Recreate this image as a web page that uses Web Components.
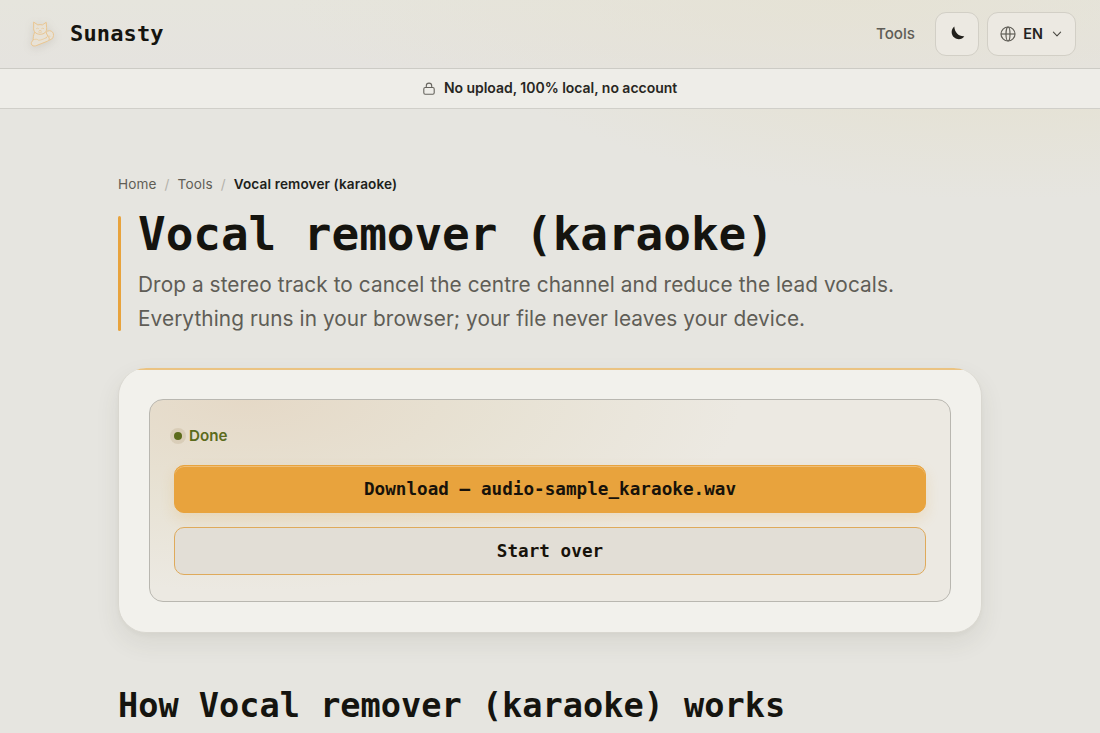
<!DOCTYPE html>
<html lang="en">
<head>
<meta charset="utf-8">
<title>Vocal remover (karaoke) - Sunasty</title>
<style>
  html, body {
    margin: 0;
    height: 100%;
    overflow: hidden;
  }

  body {
    --ink: #15140f;
    --muted: #5f5d56;
    --accent: #e8a33d;
    --line: #cccbc5;
    --mono: "DejaVu Sans Mono", "Liberation Mono", monospace;
    font-family: Inter, "Liberation Sans", sans-serif;
    color: var(--ink);
    background:
      radial-gradient(ellipse 560px 200px at 1000px 0, #e5e1d2 0%, #e5e2d5 50%, rgba(230, 229, 224, 0) 100%),
      #e6e5e0;
  }
</style>
</head>
<body>
<site-header></site-header>
<privacy-banner>No upload, 100% local, no account</privacy-banner>
<page-main>
  <bread-crumbs current="Vocal remover (karaoke)"></bread-crumbs>
  <tool-hero>
    <span slot="title">Vocal remover (karaoke)</span>
    Drop a stereo track to cancel the centre channel and reduce the lead vocals. Everything runs in your browser; your file never leaves your device.
  </tool-hero>
  <tool-card>
    <status-line>Done</status-line>
    <action-button variant="primary">Download — audio-sample_karaoke.wav</action-button>
    <action-button variant="secondary">Start over</action-button>
  </tool-card>
  <section-title>How Vocal remover (karaoke) works</section-title>
</page-main>

<script>
/** Small base: renders the template string of the subclass once */
class BaseElement extends HTMLElement {
  constructor() {
    super();
    this.attachShadow({ mode: "open" });
  }

  connectedCallback() {
    this.shadowRoot.innerHTML = this.template();
  }
}

class BrandMark extends BaseElement {
  template() {
    return `
      <style>
        :host {
          display: flex;
          align-items: center;
          gap: 12px;
        }

        svg {
          width: 34px;
          height: 34px;
          filter: drop-shadow(0 2px 4px rgba(90, 80, 60, 0.14));
        }

        .name {
          font: 700 22px/1 var(--mono);
          letter-spacing: 0.15px;
        }
      </style>
      <svg viewBox="0 0 34 34" fill="#e8e2d6" stroke="#e9c58f" stroke-width="1" stroke-linecap="round" stroke-linejoin="round">
        <path d="M21 18.500c0-3 2-4.800 4.400-4.800 2.700 0 4.400 2.200 4.100 4.800-.3 3-2.500 4.800-5.500 4.800z"/>
        <path d="M10.500 15.500c-1.200 3-1.400 5.500-1.300 7.600-1.800 1.300-2.500 3.300-1.300 4.900 1.100 1.400 3.200 1.200 5 .4l10.600-4.200c2.200-1 2.300-3.400.5-4.800l-2.200-4.400z"/>
        <path d="M10 5.300l3.800 2.600q2.200-.6 4.600 0l3.800-2.600.4 5.200c.6 4-2.200 6.800-6.400 6.800-4.300 0-7.200-2.800-6.600-6.800z"/>
        <path fill="none" stroke-width="0.7" d="M12.500 11.500q1-.8 2 0M17.700 11.500q1-.8 2 0M15.500 13.500h1.300M14.500 15q1.600.9 3.200 0M9.300 22.800c2.200-1 4-.8 5.400.5 2.800-.3 5.800-1.500 8-3M22 21.200c.7-2 2.200-2.600 4-2"/>
      </svg>
      <span class="name"><slot></slot></span>
    `;
  }
}

class HeaderButton extends BaseElement {
  template() {
    return `
      <style>
        :host {
          display: flex;
          align-items: center;
          justify-content: center;
          box-sizing: border-box;
          min-width: 44px;
          height: 44px;
          border: 1px solid #d2cfc6;
          border-radius: 11px;
          background: #ece9e2;
          color: #24231f;
          font-size: 14.4px;
          font-weight: 600;
        }
      </style>
      <slot></slot>
    `;
  }
}

class SiteHeader extends BaseElement {
  template() {
    return `
      <style>
        :host {
          display: flex;
          align-items: center;
          justify-content: space-between;
          box-sizing: border-box;
          height: 69px;
          padding: 0 24px;
          border-bottom: 1px solid var(--line);
          background:
            radial-gradient(ellipse 560px 130px at 850px 0, rgba(229, 225, 210, 0.7), rgba(230, 227, 220, 0)),
            linear-gradient(#e6e5dd, #e5e3df);
        }

        nav {
          display: flex;
          align-items: center;
          gap: 8px;
        }

        .link {
          margin: -2px 12px 0 0;
          color: var(--muted);
          font-size: 15.2px;
          font-weight: 550;
        }

        .lang {
          width: 89px;
        }

        .text {
          margin-top: -1px;
        }

        .globe {
          margin: 0 7px 0 -1px;
        }

        .chevron {
          margin-left: 9px;
        }
      </style>
      <brand-mark>Sunasty</brand-mark>
      <nav>
        <span class="link">Tools</span>
        <header-button>
          <svg width="16" height="16" viewBox="0 0 16 16" style="margin: -2px 0 0 2px">
            <path fill="#211f1b" d="M4.300 1.500C.8 4.200.8 9.800 4.300 12.600 7.700 15.200 12.400 14.400 14.300 11.200 8.700 11.600 4.600 7.500 4.300 1.500z"/>
          </svg>
        </header-button>
        <header-button class="lang">
          <svg class="globe" width="16" height="16" viewBox="0 0 16 16" fill="none" stroke="#605e57" stroke-width="1.2">
            <circle cx="8" cy="8" r="7"/>
            <ellipse cx="8" cy="8" rx="2" ry="7"/>
            <path d="M1 8h14"/>
          </svg>
          <span class="text">EN</span>
          <svg class="chevron" width="10" height="10" viewBox="0 0 10 10" fill="none" stroke="#4a4842" stroke-width="1.1" stroke-linecap="round" stroke-linejoin="round">
            <path d="M1.400 3.200L5 6.800l3.600-3.600"/>
          </svg>
        </header-button>
      </nav>
    `;
  }
}

class PrivacyBanner extends BaseElement {
  template() {
    return `
      <style>
        :host {
          display: flex;
          align-items: center;
          justify-content: center;
          gap: 9px;
          box-sizing: border-box;
          height: 40px;
          border-bottom: 1px solid #d0cfc9;
          background: #eeede8;
          color: #272622;
          font-size: 14px;
          font-weight: 600;
          letter-spacing: -0.03px;
        }

        span {
          margin-top: -2px;
        }
      </style>
      <svg width="12" height="13" viewBox="0 0 12 13" fill="none" stroke="#66645e" stroke-width="1.1">
        <rect x="0.800" y="5.500" width="10.400" height="6.700" rx="1.400"/>
        <path d="M3.300 5.500V3.800a2.700 2.700 0 0 1 5.400 0v1.700"/>
      </svg>
      <span><slot></slot></span>
    `;
  }
}

class PageMain extends BaseElement {
  template() {
    return `
      <style>
        :host {
          display: block;
          width: 864px;
          margin: 0 auto;
          padding-top: 65px;
        }
      </style>
      <slot></slot>
    `;
  }
}

class BreadCrumbs extends BaseElement {
  template() {
    return `
      <style>
        :host {
          display: flex;
          gap: 8px;
          color: var(--muted);
          font-size: 13.6px;
          line-height: 21px;
          letter-spacing: 0.12px;
        }

        .sep {
          color: #b3b1aa;
        }

        .current {
          color: #201f1b;
          font-weight: 600;
        }
      </style>
      <span>Home</span>
      <span class="sep">/</span>
      <span>Tools</span>
      <span class="sep">/</span>
      <span class="current">${this.getAttribute("current")}</span>
    `;
  }
}

class ToolHero extends BaseElement {
  template() {
    return `
      <style>
        :host {
          display: flex;
          gap: 17px;
          height: 115px;
          margin-top: 21px;
        }

        .bar {
          flex: none;
          width: 3px;
          border-radius: 2px;
          background: var(--accent);
        }

        h1 {
          margin: -7px 0 9px;
          font: 700 46px/50px var(--mono);
          letter-spacing: -0.05px;
          white-space: nowrap;
        }

        p {
          width: 780px;
          margin: 0;
          color: var(--muted);
          font-size: 20.8px;
          line-height: 34px;
          letter-spacing: 0.075px;
        }
      </style>
      <div class="bar"></div>
      <div>
        <h1><slot name="title"></slot></h1>
        <p><slot></slot></p>
      </div>
    `;
  }
}

class ToolCard extends BaseElement {
  template() {
    return `
      <style>
        :host {
          display: block;
          box-sizing: border-box;
          height: 265px;
          margin-top: 37px;
          padding: 28px 30px 30px;
          border: 1px solid #d9d7d0;
          border-top: 0;
          border-radius: 28px;
          background: linear-gradient(#ebc382, #ebc382) 0 0 / 100% 2px no-repeat, #f2f1ec;
          box-shadow: 0 10px 24px rgba(70, 65, 45, 0.09), 0 2px 4px rgba(70, 65, 45, 0.03);
        }

        .panel {
          display: flex;
          flex-direction: column;
          box-sizing: border-box;
          height: 203px;
          margin-top: 3px;
          padding: 24px;
          border: 1px solid #b9b7b0;
          border-radius: 14px;
          background:
            radial-gradient(ellipse 62% 95% at 12% 0, #e5d9c7 0%, rgba(229, 222, 204, 0.65) 50%, rgba(236, 233, 225, 0) 100%),
            #ece9e2;
        }
      </style>
      <div class="panel"><slot></slot></div>
    `;
  }
}

class StatusLine extends BaseElement {
  template() {
    return `
      <style>
        :host {
          display: flex;
          align-items: center;
          gap: 7px;
          height: 24px;
          margin: 2px 0 20px;
          color: #5c6b1c;
          font-size: 15.2px;
          font-weight: 600;
        }

        .dot {
          width: 8px;
          height: 8px;
          border-radius: 50%;
          background: #5c6b1c;
          box-shadow: 0 0 0 4px rgba(150, 125, 75, 0.16);
        }
      </style>
      <span class="dot"></span>
      <span><slot></slot></span>
    `;
  }
}

class ActionButton extends BaseElement {
  template() {
    return `
      <style>
        :host {
          display: flex;
          align-items: center;
          justify-content: center;
          box-sizing: border-box;
          flex: none;
          height: 48px;
          margin-bottom: 14px;
          padding-top: 1px;
          border: 1px solid var(--accent);
          border-radius: 10px;
          font: 700 17.6px/1 var(--mono);
          letter-spacing: 0.04px;
          color: #17120a;
        }

        :host([variant="primary"]) {
          background: #e8a33d;
          box-shadow: inset 0 1px 0 rgba(255, 255, 255, 0.3), 0 6px 14px rgba(232, 163, 61, 0.2);
        }

        :host([variant="secondary"]) {
          border-color: #dfaa5b;
          background: #e2ded6;
        }
      </style>
      <span><slot></slot></span>
    `;
  }
}

class SectionTitle extends BaseElement {
  template() {
    return `
      <style>
        :host {
          display: block;
          margin-top: 52px;
        }

        h2 {
          margin: 0;
          font: 700 33.6px/42px var(--mono);
          white-space: nowrap;
        }
      </style>
      <h2><slot></slot></h2>
    `;
  }
}

customElements.define("brand-mark", BrandMark);
customElements.define("header-button", HeaderButton);
customElements.define("site-header", SiteHeader);
customElements.define("privacy-banner", PrivacyBanner);
customElements.define("page-main", PageMain);
customElements.define("bread-crumbs", BreadCrumbs);
customElements.define("tool-hero", ToolHero);
customElements.define("tool-card", ToolCard);
customElements.define("status-line", StatusLine);
customElements.define("action-button", ActionButton);
customElements.define("section-title", SectionTitle);
</script>
</body>
</html>
